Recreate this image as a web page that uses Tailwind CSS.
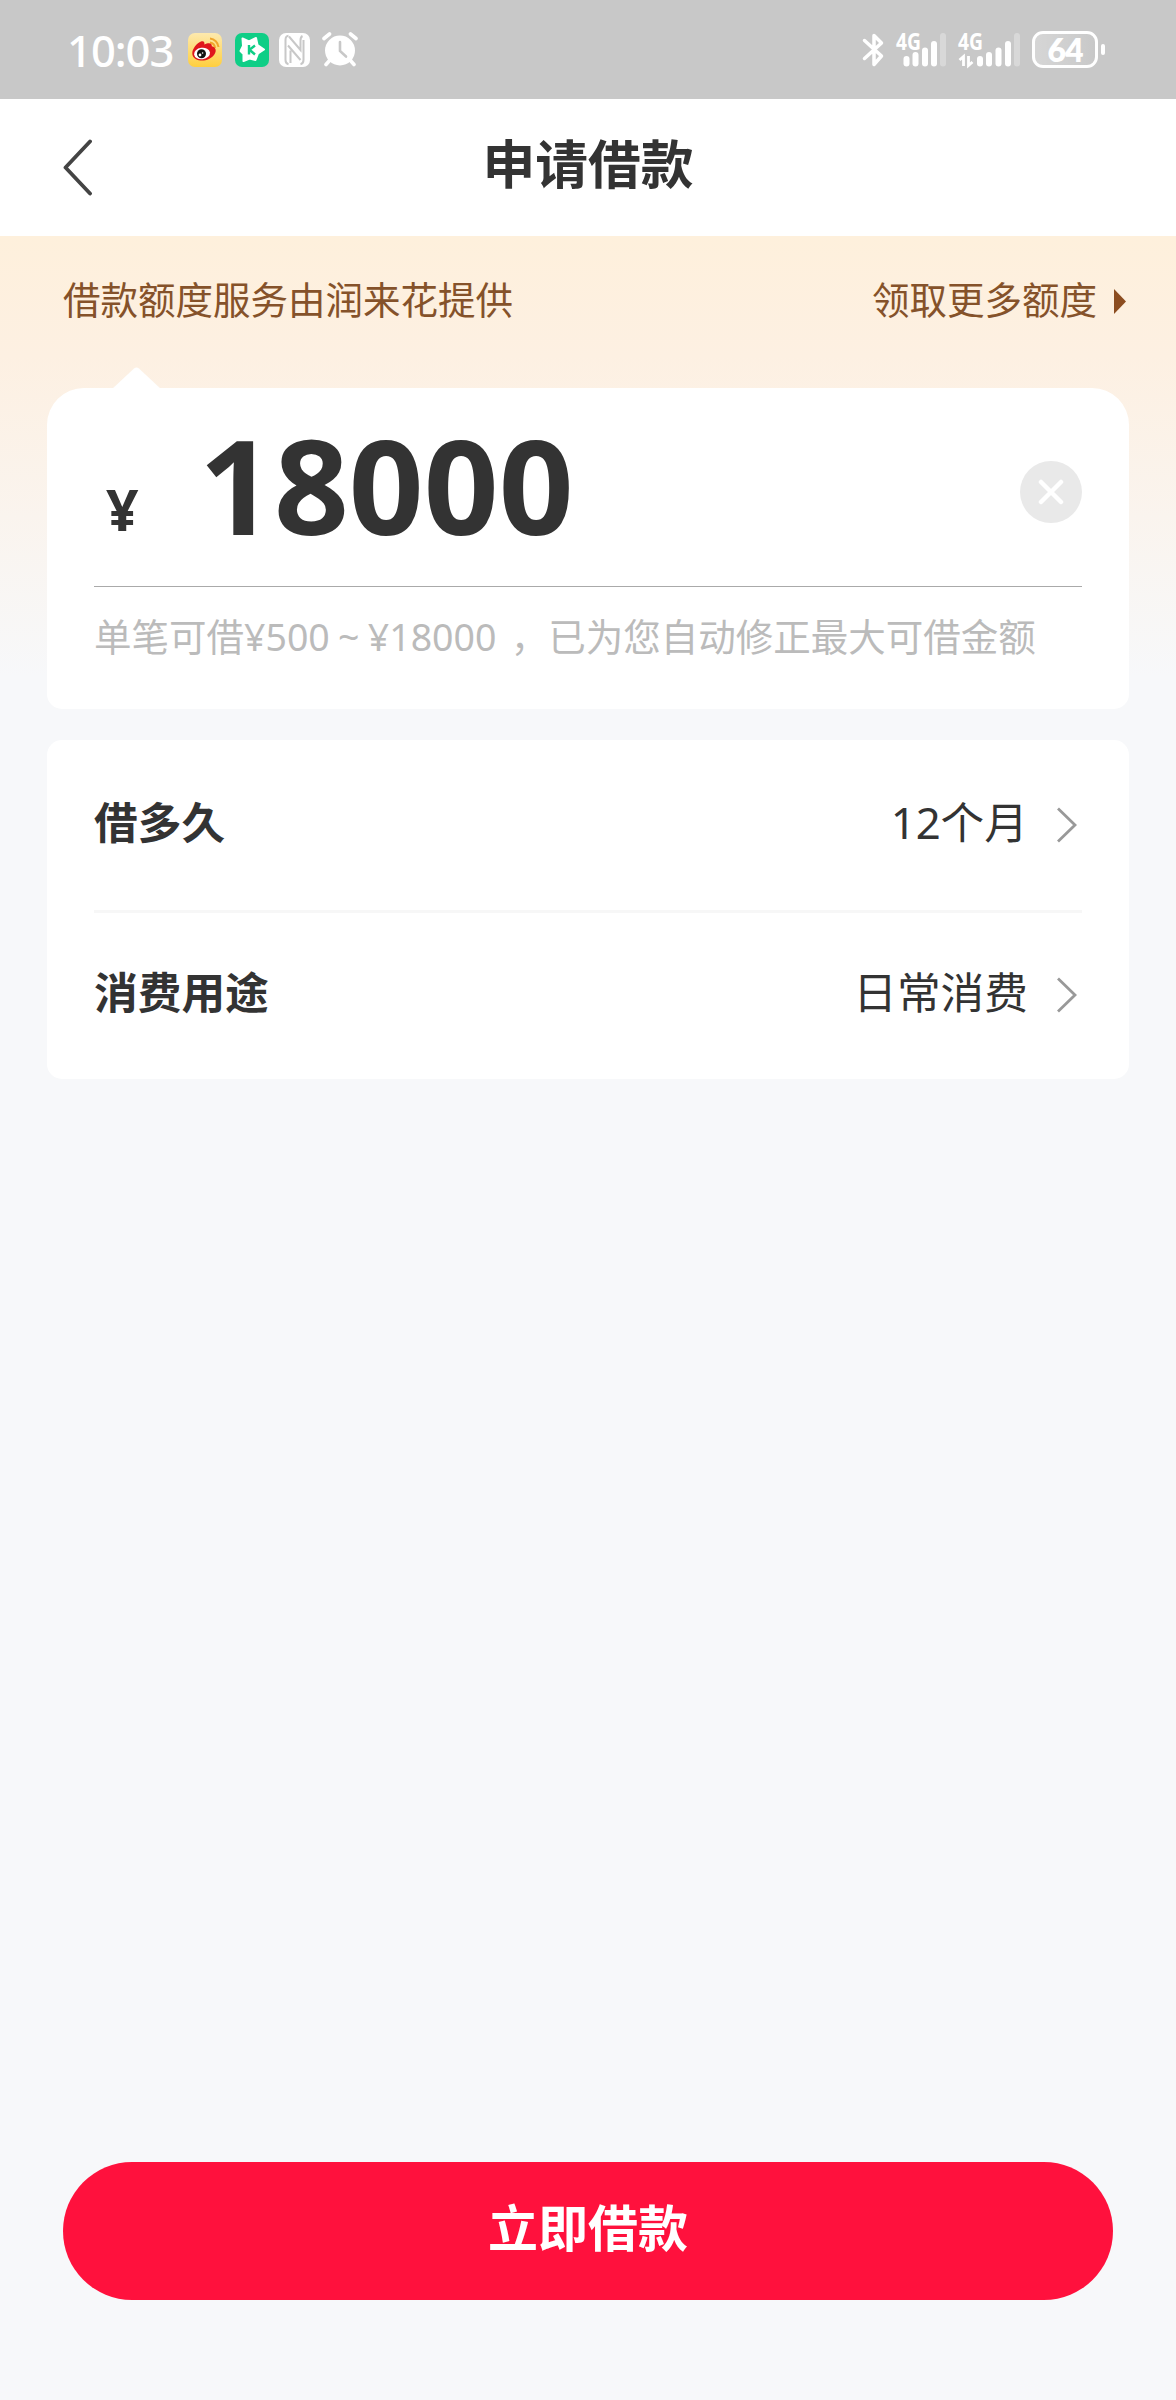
<!DOCTYPE html>
<html lang="zh-CN">
<head>
  <meta charset="UTF-8" />
  <meta name="viewport" content="width=device-width, initial-scale=1.0" />
  <title>申请借款</title>
  <script src="https://cdn.jsdelivr.net/npm/@tailwindcss/browser@4"></script>
</head>
<body class="bg-[#f7f8fa] text-[#333] font-['Noto_Sans','Noto_Sans_CJK_SC',sans-serif]">
  <div class="w-[1176px] h-[2400px] flex flex-col">

    <!-- Status bar -->
    <div class="h-[99px] shrink-0 bg-[#c8c8c8] text-white flex items-center justify-between pl-[67px] pr-[71px]">
      <div class="flex items-center">
        <span class="w-[121px] text-[43.500px] leading-[60px] font-medium tracking-[-1px]">10:03</span>
        <!-- Weibo -->
        <svg class="w-[34px] h-[34px] mr-[13px]" viewBox="0 0 34 34">
          <defs><linearGradient id="wb" x1="0" y1="0" x2="0" y2="1"><stop offset="0" stop-color="#fde9ae"/><stop offset="1" stop-color="#ffcf3e"/></linearGradient></defs>
          <rect width="34" height="34" rx="7" fill="url(#wb)"/>
          <path d="M22 9.500a6 6 0 0 1 5 5.500M22 5.500a9.500 9.500 0 0 1 8.500 8.500" fill="none" stroke="#f0a52c" stroke-width="2"/>
          <path d="M13 8.500c2.500-1 4 .3 3.300 3 4-2 8-1.800 7.500 1.800 4.500 1.200 4.700 5 2.700 8-3 4.700-9 6.700-14 6.200C7.500 27 4 24 4.300 19.700 4.600 15.500 9 10 13 8.500z" fill="#e0161c"/>
          <ellipse cx="14" cy="20.500" rx="8" ry="5.800" fill="#fff" transform="rotate(-8 14 20.500)"/>
          <circle cx="13.500" cy="20.700" r="4.500" fill="#111"/>
          <circle cx="12" cy="22" r="1.400" fill="#fff"/><circle cx="14.600" cy="20" r=".8" fill="#fff"/>
        </svg>
        <!-- Green star app -->
        <svg class="w-[34px] h-[34px] mr-[10px]" viewBox="0 0 34 34">
          <rect width="34" height="34" rx="7" fill="#0fce86"/>
          <path d="M7.500 5.500l6.500 3 7-3.500 1.500 7 6.500 4.500-6 4-2.500 6.500-6-1.500-6 2.500 0-7-3-3 2.500-5z" fill="#fff" stroke="#fff" stroke-width="2" stroke-linejoin="round"/>
          <path d="M14 12v9.500M20 12.500l-5.500 4.200 5.500 4.800" fill="none" stroke="#0fce86" stroke-width="2.400"/>
        </svg>
        <!-- NFC -->
        <svg class="w-[31px] h-[34px] mr-[12px]" viewBox="0 0 31 34">
          <rect width="31" height="34" rx="7" fill="#fff"/>
          <path d="M9.500 2.800Q6.500 3 6.500 7v20q0 3.500 3 4.200M9 12.500L21.500 27M10 3.500L21.500 17V7.500q0-3.500 2-4.500M11.500 17.500V30M21.500 31.200q3-.7 3-4.200V7" fill="none" stroke="#c8c8c8" stroke-width="2"/>
        </svg>
        <!-- Alarm -->
        <svg class="w-[36px] h-[35px]" viewBox="0 0 36 35">
          <g fill="none" stroke="#fff" stroke-width="3.600" stroke-linecap="round"><path d="M2 6.500L7.500 2M34 6.500L28.500 2M8 28l-4 4.500M28 28l4 4.500"/></g>
          <circle cx="18" cy="18.500" r="15" fill="#fff"/>
          <path d="M18 10v9l6 5.500" fill="none" stroke="#c8c8c8" stroke-width="2.600" stroke-linecap="round"/>
        </svg>
      </div>

      <div class="flex items-center">
        <!-- Bluetooth -->
        <svg class="w-[23px] h-[36px] mr-[11px]" viewBox="0 0 23 36"><path d="M2.500 8.500l17 15.500-7.500 8.500V3.500L19.500 11l-17 15.500" fill="none" stroke="#fff" stroke-width="3.500" stroke-linecap="round" stroke-linejoin="round"/></svg>
        <!-- SIM 1 -->
        <svg class="w-[51px] h-[36px] mr-[11px] overflow-visible" viewBox="0 0 51 36" fill="#fff">
          <text x="0" y="17.500" font-size="23" font-weight="700" textLength="25" lengthAdjust="spacingAndGlyphs">4G</text>
          <rect x="7.500" y="24" width="6" height="10.500" rx="3"/><rect x="16.500" y="20" width="6" height="14.500" rx="3"/><rect x="26" y="15.500" width="6" height="19" rx="3"/><rect x="35" y="9" width="6" height="25.500" rx="3"/><rect x="44" y="1" width="6" height="33.500" rx="3" opacity=".3"/>
        </svg>
        <!-- SIM 2 -->
        <svg class="w-[63px] h-[36px] mr-[11px] overflow-visible" viewBox="0 0 63 36" fill="#fff">
          <text x="0" y="17.500" font-size="23" font-weight="700" textLength="25" lengthAdjust="spacingAndGlyphs">4G</text>
          <path d="M1.500 28l4-3.500V34M10.500 24v9.500l4-3.500" fill="none" stroke="#fff" stroke-width="2.800"/>
          <rect x="19" y="24" width="6" height="10.500" rx="3"/><rect x="28" y="20" width="6" height="14.500" rx="3"/><rect x="37.500" y="15.500" width="6" height="19" rx="3"/><rect x="47" y="9" width="6" height="25.500" rx="3"/><rect x="56" y="1" width="6" height="33.500" rx="3" opacity=".3"/>
        </svg>
        <!-- Battery -->
        <div class="w-[66px] h-[37px] border-[3px] border-white rounded-[11px] bg-gradient-to-r from-white/25 via-white/15 to-transparent flex items-center justify-center text-[32px] leading-[31px] font-extrabold tracking-[-1px] font-['Lato',sans-serif]">64</div>
        <div class="w-1 h-[11px] ml-[3px] rounded-sm bg-white"></div>
      </div>
    </div>

    <!-- Header -->
    <header class="h-[137px] shrink-0 bg-white grid grid-cols-3 items-center">
      <svg class="w-[30px] h-[58px] ml-[62px]" viewBox="0 0 30 58"><path d="M28 2.500L3.500 28.500 28 54.500" fill="none" stroke="#444" stroke-width="3.800" stroke-linecap="round" stroke-linejoin="round"/></svg>
      <h1 class="text-center text-[52.800px] leading-[60px] font-bold mt-[-8px]">申请借款</h1>
    </header>

    <main class="flex-1 flex flex-col bg-[linear-gradient(to_bottom,#fef0dc_0px,#fdf0e2_120px,#f7f8fa_440px)]">
      <div class="h-[152px] shrink-0 flex items-start justify-between pt-[39px] pl-[63px] pr-[50px] text-[37.500px] leading-[50px] text-[#85522a]">
        <span>借款额度服务由润来花提供</span>
        <span class="flex items-center">
          领取更多额度
          <svg class="w-[12px] h-[25px] ml-[17px] mt-[2px]" viewBox="0 0 12 25"><path d="M0 0l12 12.500L0 25z" fill="#8c4d20"/></svg>
        </span>
      </div>

      <!-- Amount card -->
      <section class="relative h-[321px] shrink-0 mx-[47px] px-[47px] bg-white rounded-t-[37px] rounded-b-[15px]">
        <svg class="absolute left-[65px] top-[-21px] w-[49px] h-[22px]" viewBox="0 0 49 22"><path d="M0 22L22 1.500q2.500-2 5 0L49 22z" fill="#fff"/></svg>
        <div class="h-[199px] border-b border-[#aaa] flex items-center">
          <span class="w-[105px] pl-[12px] pt-[44px] text-[57px] leading-[60px] font-bold">¥</span>
          <span class="flex-1 mt-[-6px] text-[131px] leading-[140px] font-bold">18000</span>
          <span class="w-[62px] h-[62px] mt-[10px] rounded-full bg-[#e9e9e9] flex items-center justify-center">
            <svg class="w-[26px] h-[26px]" viewBox="0 0 26 26"><path d="M3 3l20 20M23 3L3 23" stroke="#fff" stroke-width="4.500" stroke-linecap="round"/></svg>
          </span>
        </div>
        <p class="mt-[25px] text-[37.500px] leading-[50px] text-[#bbb] whitespace-nowrap [word-spacing:-1.5px]">单笔可借¥500 ~ ¥18000 <span class="ml-[6px]">，已为您自动修正最大可借金额</span></p>
      </section>

      <!-- Loan options -->
      <section class="h-[339px] shrink-0 mt-[31px] mx-[47px] px-[47px] bg-white rounded-[15px]">
        <div class="h-[173px] border-b-[3px] border-[#f7f7f7] flex items-center text-[43.700px] leading-[50px]">
          <span class="font-bold flex-1 mt-[-6px]">借多久</span>
          <span class="mt-[-6px]">12个月</span>
          <svg class="w-[21px] h-[36px] ml-[28px] mr-[5px]" viewBox="0 0 21 36"><path d="M2 1.500L19 18 2 34.500" fill="none" stroke="#999" stroke-width="2.800"/></svg>
        </div>
        <div class="h-[166px] flex items-center text-[43.700px] leading-[50px]">
          <span class="font-bold flex-1 mt-[-8px]">消费用途</span>
          <span class="mt-[-8px]">日常消费</span>
          <svg class="w-[21px] h-[36px] ml-[28px] mr-[5px] mt-[-2px]" viewBox="0 0 21 36"><path d="M2 1.500L19 18 2 34.500" fill="none" stroke="#999" stroke-width="2.800"/></svg>
        </div>
      </section>

      <button class="mt-auto mb-[100px] mx-[63px] h-[138px] shrink-0 rounded-full bg-[#ff113d] text-white text-[50px] leading-[60px] font-bold pb-[6px]">立即借款</button>
    </main>
  </div>
</body>
</html>
